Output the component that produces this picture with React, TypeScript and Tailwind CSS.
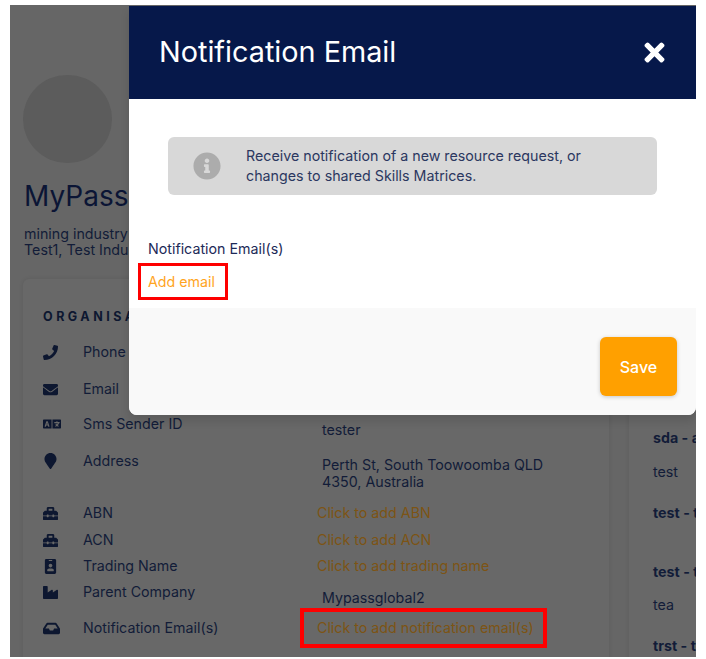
import { ReactNode } from "react";
import {
  FaEnvelope,
  FaIdBadge,
  FaInbox,
  FaIndustry,
  FaInfoCircle,
  FaLanguage,
  FaMapMarker,
  FaPhone,
  FaTimes,
  FaToolbox,
} from "react-icons/fa";

type Row = {
  icon: ReactNode;
  label: string;
  value?: string;
  valueTop?: string;
  action?: string;
  height: string;
};

const rows: Row[] = [
  { icon: <FaPhone className="h-[15px] w-[15px]" />, label: "Phone", height: "h-[37px]" },
  { icon: <FaEnvelope className="h-[15px] w-[15px]" />, label: "Email", height: "h-[35px]" },
  {
    icon: <FaLanguage className="h-[18px] w-[18px]" />,
    label: "Sms Sender ID",
    value: "tester",
    valueTop: "mt-[7px]",
    height: "h-[37px]",
  },
  {
    icon: <FaMapMarker className="h-[16px] w-[15px]" />,
    label: "Address",
    value: "Perth St, South Toowoomba QLD 4350, Australia",
    valueTop: "mt-[5px]",
    height: "h-[52px]",
  },
  { icon: <FaToolbox className="h-[15px] w-[15px]" />, label: "ABN", action: "Click to add ABN", height: "h-[27px]" },
  { icon: <FaToolbox className="h-[15px] w-[15px]" />, label: "ACN", action: "Click to add ACN", height: "h-[26px]" },
  { icon: <FaIdBadge className="h-[15px] w-[15px]" />, label: "Trading Name", action: "Click to add trading name", height: "h-[26px]" },
  {
    icon: <FaIndustry className="h-[15px] w-[15px]" />,
    label: "Parent Company",
    value: "Mypassglobal2",
    valueTop: "mt-[7px]",
    height: "h-[36px]",
  },
  {
    icon: <FaInbox className="h-[17px] w-[17px]" />,
    label: "Notification Email(s)",
    action: "Click to add notification email(s)",
    height: "h-[30px]",
  },
];

function OrgRow({ row }: { row: Row }) {
  return (
    <div className={`flex items-start ${row.height}`}>
      <span className="flex h-[20px] w-[40px] shrink-0 items-center text-[#0d1730]">{row.icon}</span>
      <span className="h-[20px] w-[234px] shrink-0 text-[14.25px] leading-[20px] text-[#121c38]">{row.label}</span>
      {row.action ? (
        <span className="text-[14.25px] leading-[20px] text-[#7d5414]">{row.action}</span>
      ) : (
        <span className={`w-[240px] pl-[5px] text-[14.25px] leading-[17px] text-[#121c38] ${row.valueTop}`}>{row.value}</span>
      )}
    </div>
  );
}

function SideItem({ text, bold, className }: { text: string; bold?: boolean; className: string }) {
  return (
    <p className={`whitespace-nowrap text-[14.25px] leading-[20px] text-[#121c38] ${bold ? "font-bold" : ""} ${className}`}>
      {text}
    </p>
  );
}

export default function App() {
  return (
    <div className="h-[659px] w-[706px] overflow-hidden bg-white pl-[10px] pt-[5px] font-['Inter',sans-serif]">
      <div className="relative h-[652px] w-[686px] overflow-hidden bg-[#666666]">
        {/* page behind the dialog */}
        <div className="flex flex-col pl-[13px]">
          <div className="mt-[70px] h-[88px] w-[89px] rounded-full bg-[#5c5c5c]" />
          <h1 className="ml-[1px] mt-[13px] text-[28px] leading-[40px] text-[#0b1535]">MyPass</h1>
          <p className="ml-[1px] mt-[10px] text-[14.25px] leading-[16px] text-[#121c38]">mining industry</p>
          <p className="ml-[1px] text-[14.25px] leading-[16px] text-[#121c38]">Test1, Test Industry</p>

          <div className="mt-[21px] flex gap-[20px]">
            <div className="h-[400px] w-[586px] shrink-0 rounded-md bg-[#686868] pl-[20px] pt-[29px] shadow-[0_0_4px_rgba(0,0,0,0.1)]">
              <h2 className="text-[12.5px] font-bold leading-[18px] tracking-[3.5px] text-[#0d1730]">ORGANISATION</h2>
              <div className="mt-[16px]">
                {rows.map((row) => (
                  <OrgRow key={row.label} row={row} />
                ))}
              </div>
            </div>
            <div className="h-[400px] w-[200px] shrink-0 rounded-md bg-[#686868] pl-[24px] pt-[149px] shadow-[0_0_4px_rgba(0,0,0,0.1)]">
              <SideItem bold text="sda - admin" className="" />
              <SideItem text="test" className="mt-[14px]" />
              <SideItem bold text="test - test" className="mt-[21px]" />
              <SideItem bold text="test - test" className="mt-[39px]" />
              <SideItem text="tea" className="mt-[13px]" />
              <SideItem bold text="trst - test" className="mt-[21px]" />
            </div>
          </div>
        </div>

        {/* dialog */}
        <div className="absolute left-[119px] top-[1px] flex h-[409px] w-[567px] flex-col overflow-hidden rounded-b-lg bg-white shadow-[0_6px_10px_rgba(0,0,0,0.12)]">
          <div className="flex h-[93px] shrink-0 items-center justify-between bg-[#06184a] pl-[30px] pr-[27px]">
            <h3 className="text-[28.8px] font-normal leading-none text-white">Notification Email</h3>
            <FaTimes className="h-[29px] w-[29px] text-white" />
          </div>
          <div className="flex-1 pl-[19px]">
            <div className="ml-[20px] mt-[38px] flex h-[58px] w-[489px] items-center rounded-md bg-[#d8d8d8] pl-[25px]">
              <FaInfoCircle className="h-[28px] w-[28px] shrink-0 text-[#acacac]" />
              <p className="ml-[25px] text-[14.25px] leading-[20px] text-[#2b3760]">
                Receive notification of a new resource request, or
                <br />
                changes to shared Skills Matrices.
              </p>
            </div>
            <p className="mt-[44px] text-[14.25px] leading-[20px] text-[#1d2a58]">Notification Email(s)</p>
            <p className="mt-[13px] text-[14.25px] leading-[20px] text-[#ffa51f]">Add email</p>
          </div>
          <div className="flex h-[107px] shrink-0 items-start justify-end bg-[#f9f9f9] pr-[19px] pt-[29px]">
            <button className="h-[59px] w-[77px] rounded-md bg-[#ffa000] text-[16px] font-medium text-white shadow-[0_1px_4px_rgba(0,0,0,0.2)]">
              Save
            </button>
          </div>
        </div>

        {/* annotation boxes */}
        <div className="absolute left-[128px] top-[258px] h-[37px] w-[90px] border-[3px] border-[#fe0000]" />
        <div className="absolute left-[290px] top-[603px] h-[40px] w-[247px] border-[4px] border-[#fe0000]" />
      </div>
    </div>
  );
}
